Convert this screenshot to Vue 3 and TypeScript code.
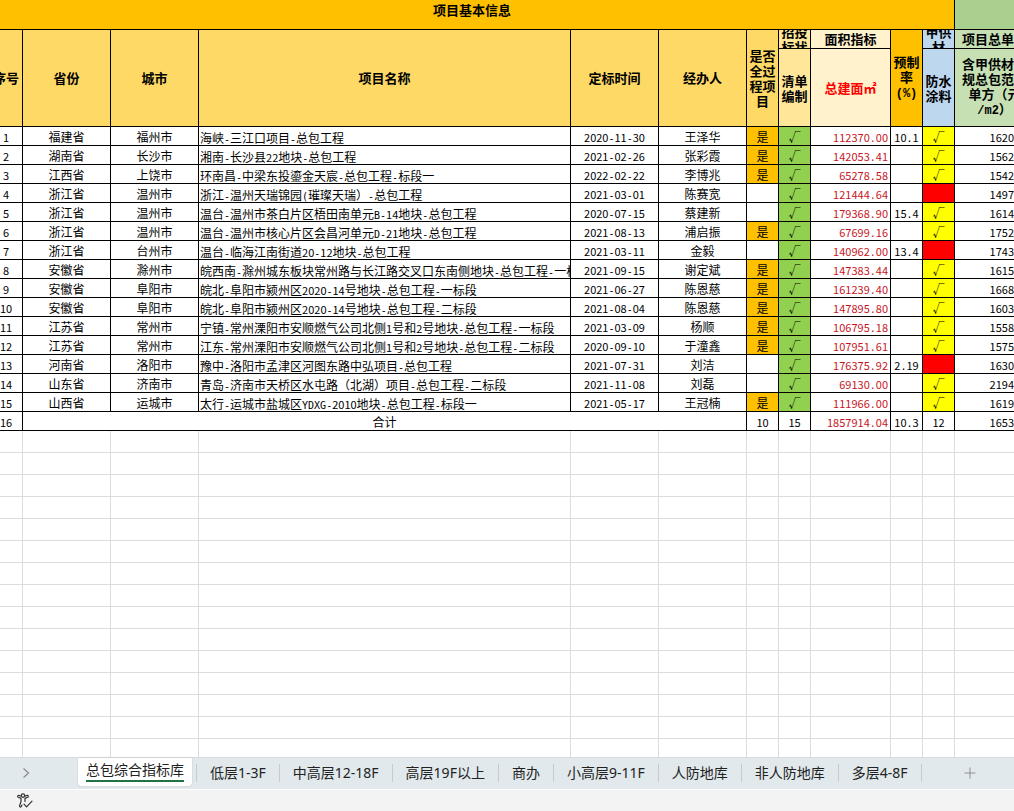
<script setup lang="ts">
import { h, ref } from 'vue'

interface Row {
  province: string
  city: string
  project: string
  date: string
  owner: string
  whole: boolean
  area: string
  rate: string
  coating: boolean
  price: string
}

type Source = [string, string, string, string, string, boolean, string, string, boolean, string]

const source: Source[] = [
  ['福建省', '福州市', '海峡-三江口项目-总包工程', '2020-11-30', '王泽华', true, '112370.00', '10.1', true, '1620'],
  ['湖南省', '长沙市', '湘南-长沙县22地块-总包工程', '2021-02-26', '张彩霞', true, '142053.41', '', true, '1562'],
  ['江西省', '上饶市', '环南昌-中梁东投鎏金天宸-总包工程-标段一', '2022-02-22', '李博兆', true, '65278.58', '', true, '1542'],
  ['浙江省', '温州市', '浙江-温州天瑞锦园(璀璨天瑞）-总包工程', '2021-03-01', '陈赛宽', false, '121444.64', '', false, '1497'],
  ['浙江省', '温州市', '温台-温州市茶白片区梧田南单元B-14地块-总包工程', '2020-07-15', '蔡建新', false, '179368.90', '15.4', true, '1614'],
  ['浙江省', '温州市', '温台-温州市核心片区会昌河单元D-21地块-总包工程', '2021-08-13', '浦启振', true, '67699.16', '', true, '1752'],
  ['浙江省', '台州市', '温台-临海江南街道20-12地块-总包工程', '2021-03-11', '金毅', false, '140962.00', '13.4', false, '1743'],
  ['安徽省', '滁州市', '皖西南-滁州城东板块常州路与长江路交叉口东南侧地块-总包工程-一标段', '2021-09-15', '谢定斌', true, '147383.44', '', true, '1615'],
  ['安徽省', '阜阳市', '皖北-阜阳市颍州区2020-14号地块-总包工程-一标段', '2021-06-27', '陈恩慈', true, '161239.40', '', true, '1668'],
  ['安徽省', '阜阳市', '皖北-阜阳市颍州区2020-14号地块-总包工程-二标段', '2021-08-04', '陈恩慈', true, '147895.80', '', true, '1603'],
  ['江苏省', '常州市', '宁镇-常州溧阳市安顺燃气公司北侧1号和2号地块-总包工程-一标段', '2021-03-09', '杨顺', true, '106795.18', '', true, '1558'],
  ['江苏省', '常州市', '江东-常州溧阳市安顺燃气公司北侧1号和2号地块-总包工程-二标段', '2020-09-10', '于潼鑫', true, '107951.61', '', true, '1575'],
  ['河南省', '洛阳市', '豫中-洛阳市孟津区河图东路中弘项目-总包工程', '2021-07-31', '刘洁', false, '176375.92', '2.19', false, '1630'],
  ['山东省', '济南市', '青岛-济南市天桥区水屯路（北湖）项目-总包工程-二标段', '2021-11-08', '刘磊', false, '69130.00', '', true, '2194'],
  ['山西省', '运城市', '太行-运城市盐城区YDXG-2010地块-总包工程-标段一', '2021-05-17', '王冠楠', true, '111966.00', '', true, '1619'],
]

const rows: Row[] = source.map(([province, city, project, date, owner, whole, area, rate, coating, price]) => ({
  province, city, project, date, owner, whole, area, rate, coating, price,
}))

const sheets = ['总包综合指标库', '低层1-3F', '中高层12-18F', '高层19F以上', '商办', '小高层9-11F', '人防地库', '非人防地库', '多层4-8F']
const active = ref(0)

function kind(run: string): string {
  if (/^\d/.test(run)) return 'digits'
  return run.charCodeAt(0) < 127 ? 'half' : 'full'
}

/* Sets digits, half-width signs and full-width characters each in their own face. */
const Mixed = (props: { text: string }) =>
  h('span', (props.text.match(/\d+|[\x20-\x2f\x3a-\x7e]+|[^\x20-\x7e]+/g) ?? []).map((t) => h('span', { class: kind(t) }, t)))
Mixed.props = ['text']
</script>

<template>
  <div class="workbook">
    <main class="grid">
      <table class="sheet">
        <colgroup>
          <col class="c-no" />
          <col class="c-mid" />
          <col class="c-mid" />
          <col class="c-project" />
          <col class="c-mid" />
          <col class="c-mid" />
          <col class="c-slim" />
          <col class="c-slim" />
          <col class="c-area" />
          <col class="c-slim" />
          <col class="c-slim" />
          <col />
        </colgroup>
        <thead>
          <tr class="title-row">
            <th colspan="11" class="amber">项目基本信息</th>
            <th class="green"></th>
          </tr>
          <tr class="group-row">
            <th rowspan="2" class="gold">序号</th>
            <th rowspan="2" class="gold">省份</th>
            <th rowspan="2" class="gold">城市</th>
            <th rowspan="2" class="gold">项目名称</th>
            <th rowspan="2" class="gold">定标时间</th>
            <th rowspan="2" class="gold">经办人</th>
            <th rowspan="2" class="gold lines">是否<br />全过<br />程项<br />目</th>
            <th class="sand"><div class="clip">招投<br />标状</div></th>
            <th class="cream">面积指标</th>
            <th rowspan="2" class="amber lines">预制<br />率<br /><span class="latin">(%)</span></th>
            <th class="sky"><div class="clip">甲供<br />材</div></th>
            <th class="mint">项目总单方</th>
          </tr>
          <tr class="label-row">
            <th class="sand lines">清单<br />编制</th>
            <th class="cream red-text">总建面㎡</th>
            <th class="sky lines">防水<br />涂料</th>
            <th class="mint lines">含甲供材精<br />规总包范围<br />单方（元<br /><span class="latin">/m2</span>）</th>
          </tr>
        </thead>
        <tbody>
          <tr v-for="(r, i) in rows" :key="i" class="data-row">
            <td><Mixed :text="String(i + 1)" /></td>
            <td>{{ r.province }}</td>
            <td>{{ r.city }}</td>
            <td class="project">
              <div class="project-name"><Mixed :text="r.project" /></div>
            </td>
            <td><Mixed :text="r.date" /></td>
            <td>{{ r.owner }}</td>
            <td :class="{ amber: r.whole }">{{ r.whole ? '是' : '' }}</td>
            <td class="lime">√</td>
            <td class="area"><Mixed :text="r.area" /></td>
            <td><Mixed :text="r.rate" /></td>
            <td :class="r.coating ? 'yellow' : 'red'">{{ r.coating ? '√' : '' }}</td>
            <td class="price"><Mixed :text="r.price" /></td>
          </tr>
          <tr class="data-row">
            <td><Mixed text="16" /></td>
            <td colspan="5">合计</td>
            <td><Mixed text="10" /></td>
            <td><Mixed text="15" /></td>
            <td class="area"><Mixed text="1857914.04" /></td>
            <td><Mixed text="10.3" /></td>
            <td><Mixed text="12" /></td>
            <td class="price"><Mixed text="1653" /></td>
          </tr>
          <tr v-for="n in 15" :key="'blank' + n" class="blank-row">
            <td v-for="c in 12" :key="c"></td>
          </tr>
        </tbody>
      </table>
    </main>

    <nav class="tabs" aria-label="工作表">
      <button class="next" type="button" aria-label="下一个">
        <svg width="8" height="12" viewBox="0 0 8 12"><path d="M1.5 1.5 6.5 6l-5 4.5" fill="none" stroke="#8b9092" stroke-width="1.3" /></svg>
      </button>
      <button
        v-for="(s, i) in sheets"
        :key="s"
        type="button"
        class="tab"
        :class="{ active: i === active }"
        @click="active = i"
      ><span>{{ s }}</span></button>
      <button class="add" type="button" aria-label="新建工作表">
        <svg width="12" height="12" viewBox="0 0 12 12"><path d="M6 0.5v11M0.5 6h11" fill="none" stroke="#8b9092" stroke-width="1" /></svg>
      </button>
    </nav>

    <footer class="status">
      <button class="access" type="button" aria-label="辅助功能">
        <svg width="16" height="16" viewBox="0 0 16 16" fill="none" stroke="#333" stroke-width="1.2" stroke-linecap="round" stroke-linejoin="round">
          <circle cx="6" cy="2.6" r="1.7" />
          <path d="M4.3 3.2 1.9 2.4C.7 2.2 .2 3.8 1.3 4.3L4 5.4V8.5L2.6 12.6C2.3 14.2 3.9 14.5 4.4 13.3L5 12" />
          <path d="M7.7 3.2 10.1 2.4C11.3 2.2 11.8 3.8 10.7 4.3L8 5.4V8.5" />
          <path d="M7 11.2 9.6 13.8 15 8.2" />
        </svg>
      </button>
    </footer>
  </div>
</template>

<style>
body {
  margin: 0;
}

.sheet .digits {
  font-size: 11px;
  line-height: 10px;
}

.sheet .half {
  font-family: "DejaVu Sans Mono", monospace;
  font-size: 10px;
  line-height: 10px;
}
</style>

<style scoped>
.workbook {
  display: flex;
  flex-direction: column;
  height: 100vh;
  overflow: hidden;
  background: #fff;
  color: #000;
  font-family: "Noto Sans CJK SC", sans-serif;
  font-size: 12px;
}

.grid {
  flex: 1;
  min-height: 0;
  overflow: hidden;
}

.sheet {
  table-layout: fixed;
  width: calc(100% + 31px);
  margin-left: -10px;
  border-collapse: separate;
  border-spacing: 0;
}

.c-no { width: 33px; }
.c-mid { width: 88px; }
.c-project { width: 372px; }
.c-slim { width: 32px; }
.c-area { width: 80px; }

th,
td {
  box-sizing: border-box;
  padding: 0;
  overflow: hidden;
  border-right: 1px solid #000;
  border-bottom: 1px solid #000;
  text-align: center;
  vertical-align: middle;
  white-space: nowrap;
}

th {
  font-size: 13px;
  font-weight: 700;
  line-height: 18px;
}

.title-row th {
  height: 30px;
  vertical-align: top;
  line-height: 20px;
}

.group-row th {
  height: 19px;
}

.label-row th {
  height: 78px;
}

th.lines {
  line-height: 15px;
}

.clip {
  display: flex;
  align-items: center;
  justify-content: center;
  height: 18px;
  overflow: hidden;
  line-height: 15px;
}

.data-row td {
  height: 19px;
  padding-top: 2px;
  line-height: 16px;
}

.blank-row td {
  height: 22px;
  border-color: #dcdcdc;
}

.latin {
  font-family: "Liberation Mono", monospace;
  font-size: 12px;
}

.data-row .project {
  padding: 0 0 0 1px;
  text-align: left;
}

.project-name {
  height: 18px;
  overflow: hidden;
  line-height: 22px;
}

.data-row .area {
  padding-right: 2px;
  color: #c8141e;
  text-align: right;
}

.data-row .price {
  padding-right: 20px;
  text-align: right;
}

.amber { background: #ffc000; }
.gold { background: #ffd966; }
.sand { background: #ffe699; }
.cream { background: #fff2cc; }
.sky { background: #bdd7ee; }
.mint { background: #c6e0b4; }
.green { background: #a9d08e; }
.lime { background: #92d050; }
.yellow { background: #ffff00; }
.red { background: #ff0000; }
.red-text { color: #ff0000; }

button {
  flex: none;
  padding: 0;
  border: 0;
  background: none;
  color: #222;
  font: inherit;
}

.tabs {
  display: flex;
  align-items: flex-start;
  height: 31px;
  border-top: 1px solid #d6dbdc;
  border-bottom: 1px solid #fff;
  background: #e1e9ec;
  font-family: "Noto Sans", "Noto Sans CJK SC", sans-serif;
  font-size: 14px;
}

.next {
  display: flex;
  align-items: center;
  justify-content: center;
  width: 52px;
  height: 30px;
  margin-right: 26px;
}

.tab {
  height: 18px;
  margin-top: 6px;
  padding: 0 13px;
  border-right: 1px solid #c6cccd;
  line-height: 18px;
  white-space: nowrap;
}

.tab.active {
  display: flex;
  align-items: flex-start;
  height: 28px;
  margin: 0 4px 0 0;
  padding: 0 8px;
  border-right: 0;
  border-radius: 0 0 4px 4px;
  background: #fff;
  box-shadow: 0 0 2px #b9c2c5;
}

.tab.active + .tab {
  border-left: 1px solid #c6cccd;
}

.tab.active span {
  height: 22px;
  border-bottom: 2px solid #217346;
  line-height: 24px;
}

.add {
  display: flex;
  align-items: center;
  justify-content: center;
  width: 96px;
  height: 30px;
}

.status {
  display: flex;
  align-items: center;
  height: 21px;
  padding-left: 17px;
  background: #f3f3f3;
}

.access {
  display: flex;
}
</style>
